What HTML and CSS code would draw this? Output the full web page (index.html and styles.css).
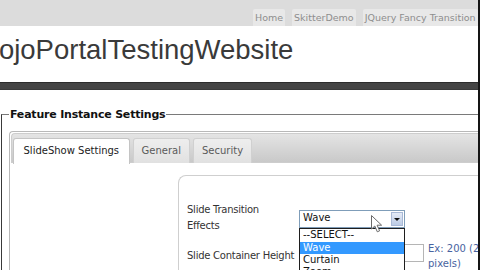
FILE: index.html
```html
<!DOCTYPE html>
<html>
	<head>
		<meta charset="utf-8">
		<title>mojoPortalTestingWebsite</title>
		<link rel="stylesheet" href="styles.css">
	</head>
	<body>
		<div class="page">
			<div class="topbar">
				<ul class="topnav">
					<li>Home</li>
					<li>SkitterDemo</li>
					<li>JQuery Fancy Transition</li>
				</ul>
			</div>
			<div class="brand">
				<h1 class="site-title">mojoPortalTestingWebsite</h1>
			</div>
			<div class="darkbar"></div>
			<div class="main">
				<fieldset class="settings">
					<legend>Feature Instance Settings</legend>
					<div class="tabs">
						<ul class="tab-nav">
							<li class="active">SlideShow Settings</li>
							<li>General</li>
							<li>Security</li>
						</ul>
						<div class="tab-panel">
							<div class="form-box">
								<div class="form-row">
									<div class="form-label">Slide Transition<br>Effects</div>
									<div class="field">
										<div class="select">
											<span class="select-text">Wave</span>
											<span class="select-btn"></span>
										</div>
										<ul class="select-list">
											<li>--SELECT--</li>
											<li class="hl">Wave</li>
											<li>Curtain</li>
											<li>Zoom</li>
										</ul>
										<svg class="pointer" width="12" height="18" viewBox="0 0 12 18">
											<path d="M0.5 0.5 L0.5 14 L3.8 11 L6.3 16.8 L8.6 15.8 L6.1 10.2 L10.6 10.2 Z" fill="#fff" stroke="#6a6a6a" stroke-width="1"/>
										</svg>
									</div>
								</div>
								<div class="form-row row2">
									<div class="form-label">Slide Container Height</div>
									<div class="field">
										<span class="textbox"></span>
										<span class="hint">Ex: 200 (200 pixels)</span>
									</div>
								</div>
							</div>
						</div>
					</div>
				</fieldset>
			</div>
		</div>
	</body>
</html>
```

FILE: styles.css
```css
* {margin:0; padding:0; box-sizing:border-box;}
li {list-style:none;}
body {
	margin:0;
	background:#fff;
	font-family:"DejaVu Sans", Verdana, sans-serif;
}
.page {
	width:480px;
	height:270px;
	overflow:hidden;
	border-right:2px solid #151515;
	display:flex;
	flex-direction:column;
}

/* top navigation */
.topbar {
	height:26px;
	flex:none;
	background:#dcdcdc;
	display:flex;
	align-items:flex-end;
}
.topnav {
	display:flex;
	gap:7px;
	padding-left:253px;
	font-size:9.5px;
	color:#8e8e8e;
	white-space:nowrap;
}
.topnav li {
	height:17px;
	line-height:18px;
	padding:0 2px;
	background:#e8e8e8;
	border-radius:2px 2px 0 0;
}

/* site name */
.brand {
	height:56px;
	flex:none;
	overflow:hidden;
	padding-top:9px;
}
.site-title {
	margin-left:-24px;
	font:normal 27.5px/30px "Liberation Sans", Arial, sans-serif;
	color:#3a3a3a;
	white-space:nowrap;
}
.darkbar {
	height:8px;
	flex:none;
	background:#444;
	border-top:1px solid #2c2c2c;
	border-bottom:1px solid #3a3a3a;
}

/* settings */
.main {
	flex:1;
	padding-top:17px;
}
.settings {
	margin:0 0 0 1px;
	padding:9px 0 0 7px;
	border:0;
	border-top:1px solid #7a7a7a;
	border-left:1px solid #3a3a3a;
	min-width:0;
	height:200px;
}
.settings legend {
	padding:0 1px;
	font-size:11px;
	line-height:15px;
	font-weight:bold;
	letter-spacing:-0.2px;
	color:#111;
}

.tabs {
	height:160px;
	border:1px solid #b8b8b8;
	border-right:0;
	border-radius:4px 0 0 0;
	padding:1px 0 0 1px;
}
.tab-nav {
	display:flex;
	gap:3px;
	height:30px;
	padding:4px 0 0 1px;
	background:linear-gradient(#e4e4e4, #c9c9c9);
	border:1px solid #cdcdcd;
	border-right:0;
	border-radius:4px 0 0 0;
	font-size:10px;
}
.tab-nav li {
	height:25px;
	line-height:23px;
	padding:0 8px;
	color:#5a5a5a;
	background:linear-gradient(#eeeeee, #e1e1e1);
	border:1px solid #d0d0d0;
	border-bottom:0;
	border-radius:3px 3px 0 0;
	white-space:nowrap;
}
.tab-nav li.active {
	height:26px;
	padding:0 9.5px;
	color:#222;
	background:#fff;
	border-color:#c4c4c4;
}

.tab-panel {
	padding:12px 0 0 167px;
}
.form-box {
	height:120px;
	border:1px solid #cfcfcf;
	border-right:0;
	border-radius:8px 0 0 0;
	padding:26px 0 0 8px;
}
.form-row {
	display:flex;
	align-items:flex-start;
	font-size:10px;
	line-height:16px;
	color:#333;
}
.form-label {
	width:112px;
	flex:none;
	white-space:nowrap;
	letter-spacing:-0.25px;
}
.field {
	position:relative;
	display:flex;
	align-items:flex-start;
}

/* select with open list */
.select {
	margin-top:8px;
	width:106px;
	height:18px;
	border:1px solid #7f9db9;
	display:flex;
	justify-content:space-between;
	padding:0 0 0 3px;
	color:#111;
	background:#fff;
}
.select-text {
	line-height:14px;
}
.select-btn {
	width:12px;
	margin:1px;
	background:linear-gradient(#e4ebf7, #bccbe5);
	border:1px solid #a9b9d6;
	display:flex;
	align-items:center;
	justify-content:center;
}
.select-btn::after {
	content:"";
	border-left:3px solid transparent;
	border-right:3px solid transparent;
	border-top:3px solid #111;
}
.select-list {
	position:absolute;
	left:0;
	top:26px;
	width:106px;
	border:1px solid #1e1e1e;
	background:#fff;
	z-index:2;
	color:#111;
}
.select-list li {
	height:12px;
	line-height:12px;
	padding-left:3px;
}
.select-list li:first-child {
	height:13px;
}
.select-list li.hl {
	background:#3399ff;
	color:#fff;
}
.pointer {
	position:absolute;
	left:72px;
	top:13px;
	z-index:3;
}

.row2 {
	margin-top:7px;
}
.row2 .form-label {
	padding-top:7px;
}
.textbox {
	display:block;
	margin-top:3px;
	width:125px;
	height:18px;
	border:1px solid #b5b5b5;
	flex:none;
}
.hint {
	width:70px;
	flex:none;
	margin-left:4px;
	line-height:15px;
	color:#4863a0;
}
```
